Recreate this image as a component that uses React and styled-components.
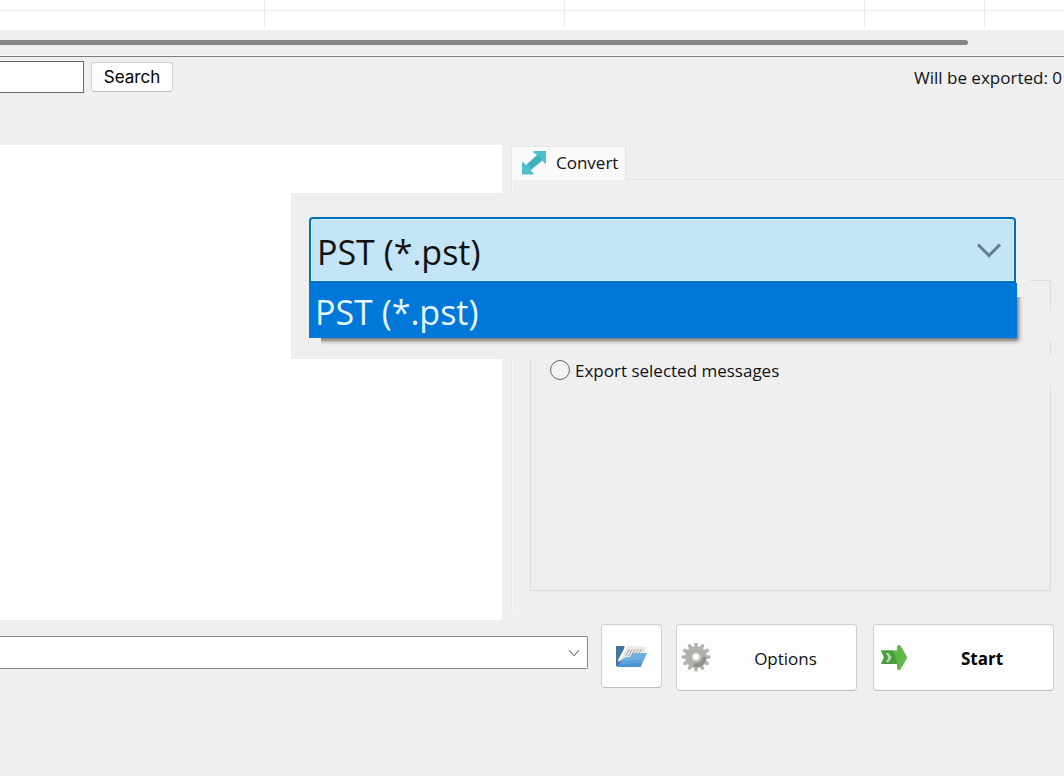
import React, { useState } from 'react';
import styled, { createGlobalStyle } from 'styled-components';

const GlobalStyle = createGlobalStyle`
    * {
        box-sizing: border-box;
    }

    body {
        margin: 0;
        background: #efefef;
        color: #111;
        font-family: 'Open Sans', 'Noto Sans', sans-serif;
        font-size: 17px;
        line-height: 24px;
    }

    button,
    input,
    select {
        font: inherit;
        color: inherit;
    }
`;

const Window = styled.div`
    display: flex;
    flex-direction: column;
    min-height: 100vh;
    overflow: hidden;
`;

const MessageTable = styled.table`
    width: 100%;
    table-layout: fixed;
    border-collapse: separate;
    border-spacing: 0;
    background: #fff;
    border-bottom: 2px solid #fff;
`;

const Cell = styled.td`
    height: ${({ $height }) => $height}px;
    padding: 0;
    border-right: 1px solid #ececec;
    border-bottom: ${({ $line }) => ($line ? '1px solid #ececec' : 'none')};

    &:last-child {
        border-right: none;
    }
`;

const ScrollTrack = styled.div`
    padding: 10px 96px 10px 0;
    border-bottom: 1px solid #fafafa;
`;

const ScrollThumb = styled.div`
    height: 5px;
    border-radius: 0 3px 3px 0;
    background: #868686;
`;

const Toolbar = styled.form`
    display: flex;
    align-items: center;
    gap: 7px;
    padding: 4px 2px 0 0;
    border-top: 1px solid #7c7c7c;
`;

const SearchInput = styled.input`
    width: 84px;
    height: 32px;
    padding: 0 8px;
    border: 1px solid #6a6a6a;
    border-left: none;
    background: #fff;
`;

const BaseButton = styled.button`
    display: flex;
    align-items: center;
    padding: 0;
    border: 1px solid #d0d0d0;
    border-bottom-color: #bcbcbc;
    border-radius: 4px;
    background: #fdfdfd;
`;

const SearchButton = styled(BaseButton)`
    justify-content: center;
    width: 82px;
    height: 30px;
    color: #000;
    font-family: Inter, sans-serif;
`;

const ExportCount = styled.output`
    margin-left: auto;
    padding-top: 2px;
`;

const Main = styled.main`
    position: relative;
    display: grid;
    grid-template-columns: 502fr 553fr;
    column-gap: 9px;
    flex: 1;
    margin-top: 52px;
`;

const Preview = styled.section`
    background: #fff;
`;

const Tabs = styled.section`
    display: flex;
    flex-direction: column;
    padding: 1px 0 10px;
`;

const TabBar = styled.div`
    display: flex;
    height: 34px;

    &::after {
        content: '';
        flex: 1;
        border-bottom: 1px solid #e2e2e2;
    }
`;

const Tab = styled.button`
    display: flex;
    align-items: center;
    gap: 10px;
    width: 115px;
    padding: 0 0 2px 10px;
    border: 1px solid #e5e5e5;
    border-bottom: none;
    background: #f9f9f9;
`;

const TabPanel = styled.div`
    display: flex;
    flex: 1;
    padding: 100px 13px 19px 18px;
    border-left: 1px solid #e3e3e3;
    box-shadow: inset 1px 0 #f8f8f8;
`;

const Group = styled.fieldset`
    flex: 1;
    min-width: 0;
    margin: 0;
    padding: 30px 0 0 19px;
    border: 1px solid #dcdcdc;
`;

const RadioRow = styled.label`
    display: flex;
    align-items: center;
    gap: 5px;
    height: 30px;
    margin: 0 -1px 14px 0;
    background: #efefef;
`;

const RadioText = styled.span`
    padding-top: 2px;
`;

const Radio = styled.input`
    appearance: none;
    width: 20px;
    height: 20px;
    margin: 0;
    border: 1px solid #666;
    border-radius: 50%;
    background: #f3f3f3;

    &:checked {
        border: 6px solid #0067c0;
    }
`;

const FormatPopup = styled.div`
    position: absolute;
    top: 48px;
    left: 291px;
    right: 34px;
    padding: 24px 14px 21px 18px;
    background: #efefef;
    font-size: 34px;
    line-height: 48px;
`;

const SelectBox = styled.div`
    display: grid;
    align-items: center;

    > * {
        grid-area: 1 / 1;
    }

    svg {
        justify-self: end;
        pointer-events: none;
    }
`;

const FormatSelect = styled.select`
    appearance: none;
    width: 100%;
    height: 66px;
    padding: 4px 6px 0;
    border: 2px solid #0070bd;
    border-radius: 4px 4px 0 0;
    background: #c4e5f6;
    box-shadow: inset 0 0 0 1px #d3f2ff;
    outline: none;
`;

const FormatList = styled.ul`
    margin: 0 -1px 0 0;
    padding: 0;
    list-style: none;
    box-shadow: 3px 4px 4px -1px #777;
    clip-path: polygon(0 0, 100% 0, 100% 14px, 120% 14px, 120% 140%, 12px 140%, 12px 100%, 0 100%);
`;

const FormatOption = styled.li`
    height: 55px;
    padding: 5px 6px 0;
    background: #0078d9;
    color: #e6f7ff;
`;

const Footer = styled.footer`
    display: flex;
    align-items: flex-start;
    gap: 16px;
    padding: 4px 10px 85px 0;
`;

const PathGroup = styled.div`
    display: flex;
    flex: 1;
    gap: 13px;
    margin-right: -2px;
`;

const PathBox = styled(SelectBox)`
    flex: 1;
    height: 33px;
    margin-top: 12px;
`;

const PathSelect = styled.select`
    appearance: none;
    width: 100%;
    height: 33px;
    padding: 0 32px 0 8px;
    border: 1px solid #858585;
    border-left: none;
    border-radius: 0 2px 2px 0;
    background: #fff;
`;

const FolderButton = styled(BaseButton)`
    justify-content: center;
    width: 61px;
    height: 64px;
`;

const ActionButton = styled(BaseButton)`
    width: 181px;
    height: 67px;
    padding-left: 4px;
    font-weight: ${({ $bold }) => ($bold ? 700 : 400)};
    color: ${({ $bold }) => ($bold ? '#000' : '#111')};
`;

const ActionLabel = styled.span`
    flex: 1;
    padding: 2px 0 0 4px;
    text-align: center;
`;

const Chevron = ({ size, inset, color, weight }) => (
    <svg
        width={size + inset}
        height={size}
        viewBox={`0 0 ${size + inset} ${size}`}
        fill="none"
        stroke={color}
        strokeWidth={weight}
        aria-hidden="true"
    >
        <path
            d={`M1 ${size * 0.27}L${size / 2} ${size * 0.73}L${size - 1} ${size * 0.27}`}
        />
    </svg>
);

const ConvertIcon = () => (
    <svg width="24" height="24" viewBox="0 0 24 24" aria-hidden="true">
        <path
            d="M11.5 0H24V12.5H22.5L20.5 9.5L8.5 19.5L11.5 22V23.5H0V11.5H1.5L4 14L15 4L11.5 1.5Z"
            fill="#4dc0cc"
        />
        <path d="M6 13L16 4L20 8L9.5 17.5Z" fill="#3fafba" />
    </svg>
);

const FolderIcon = () => (
    <svg width="31" height="21" viewBox="0 0 31 21" aria-hidden="true">
        <path d="M0 0H8L12 8L2 20L0 20Z" fill="#44749f" />
        <path d="M9 2L12 0L29 1V8L12 11L2 16Z" fill="#e9e9e7" />
        <path d="M9 1L11 1L4 14L1.5 15Z" fill="#fff" />
        <path
            d="M13.5 3L9.5 10M16.5 3L12.5 10M19.5 3L15.5 9M22.5 3L19 8M25.5 3L23 7"
            stroke="#a69f99"
            strokeWidth="1"
        />
        <path d="M8 12L14 11L17 7.5L31 7L24.5 21H1Z" fill="#5ba3dc" />
        <path d="M8 12L14 11L17 7.5L31 7L28 13L6 15Z" fill="#70b1e4" />
        <path d="M1 21L3 18L26 17L24.5 21Z" fill="#4994d3" />
    </svg>
);

const TEETH = Array.from({ length: 12 }, (_, i) => i * 30);

const GearIcon = () => (
    <svg width="30" height="30" viewBox="-15 -14 30 30" aria-hidden="true">
        {TEETH.map((angle) => (
            <path
                key={angle}
                d="M-2.5 -9L-1.3 -14.5H1.3L2.5 -9Z"
                fill="#b4b4ae"
                transform={`rotate(${angle})`}
            />
        ))}
        <circle r="10.5" fill="#b1b1ab" />
        <path d="M0 0H10.5A10.5 10.5 0 0 1 -3 10Z" fill="#92928c" />
        <circle r="6.5" fill="#aaa9a2" />
        <circle r="5" fill="#c9c9c4" />
        <circle r="3" fill="#fff" />
    </svg>
);

const StartIcon = () => (
    <svg width="29" height="25" viewBox="-3 0 29 25" aria-hidden="true">
        <path d="M0 5.5H18V19H0L3 12.5Z" fill="#5cb544" />
        <path d="M0 5.5H12L17 19H0L3 12.5Z" fill="#4b9d42" />
        <path
            d="M18 2L24 12.5L18 23Z"
            fill="#5eb945"
            stroke="#5eb945"
            strokeWidth="4"
            strokeLinejoin="round"
        />
        <path d="M5 8H7.5L10.5 12.5L7.5 17H5L7.5 12.5Z" fill="#b9dcae" />
    </svg>
);

export default function App() {
    const [format, setFormat] = useState('pst');

    return (
        <>
            <GlobalStyle />
            <Window>
                <MessageTable aria-label="Messages">
                    <colgroup>
                        <col style={{ width: 265 }} />
                        <col style={{ width: 300 }} />
                        <col style={{ width: 300 }} />
                        <col style={{ width: 120 }} />
                        <col />
                    </colgroup>
                    <tbody>
                        {[11, 17].map((height, row) => (
                            <tr key={height}>
                                {[0, 1, 2, 3, 4].map((col) => (
                                    <Cell
                                        key={col}
                                        $height={height}
                                        $line={row === 0}
                                    />
                                ))}
                            </tr>
                        ))}
                    </tbody>
                </MessageTable>
                <ScrollTrack>
                    <ScrollThumb />
                </ScrollTrack>

                <Toolbar onSubmit={(e) => e.preventDefault()}>
                    <SearchInput type="text" aria-label="Search messages" />
                    <SearchButton type="submit">Search</SearchButton>
                    <ExportCount>Will be exported: 0</ExportCount>
                </Toolbar>

                <Main>
                    <Preview aria-label="Preview" />
                    <Tabs>
                        <TabBar role="tablist">
                            <Tab type="button" role="tab" aria-selected="true">
                                <ConvertIcon />
                                Convert
                            </Tab>
                        </TabBar>
                        <TabPanel role="tabpanel">
                            <Group>
                                <RadioRow aria-label="Export all messages">
                                    <Radio
                                        type="radio"
                                        name="scope"
                                        defaultChecked
                                    />
                                </RadioRow>
                                <RadioRow>
                                    <Radio type="radio" name="scope" />
                                    <RadioText>
                                        Export selected messages
                                    </RadioText>
                                </RadioRow>
                            </Group>
                        </TabPanel>
                    </Tabs>

                    <FormatPopup>
                        <SelectBox>
                            <FormatSelect
                                aria-label="Format"
                                value={format}
                                onChange={(e) => setFormat(e.target.value)}
                            >
                                <option value="pst">PST (*.pst)</option>
                            </FormatSelect>
                            <Chevron
                                size={24}
                                inset={15}
                                color="#667d8f"
                                weight={3}
                            />
                        </SelectBox>
                        <FormatList role="listbox" aria-label="Formats">
                            <FormatOption role="option" aria-selected="true">
                                PST (*.pst)
                            </FormatOption>
                        </FormatList>
                    </FormatPopup>
                </Main>

                <Footer>
                    <PathGroup>
                        <PathBox>
                            <PathSelect aria-label="Output folder" />
                            <Chevron
                                size={12}
                                inset={8}
                                color="#444"
                                weight={1}
                            />
                        </PathBox>
                        <FolderButton type="button" aria-label="Browse">
                            <FolderIcon />
                        </FolderButton>
                    </PathGroup>
                    <ActionButton type="button">
                        <GearIcon />
                        <ActionLabel>Options</ActionLabel>
                    </ActionButton>
                    <ActionButton type="button" $bold>
                        <StartIcon />
                        <ActionLabel>Start</ActionLabel>
                    </ActionButton>
                </Footer>
            </Window>
        </>
    );
}
